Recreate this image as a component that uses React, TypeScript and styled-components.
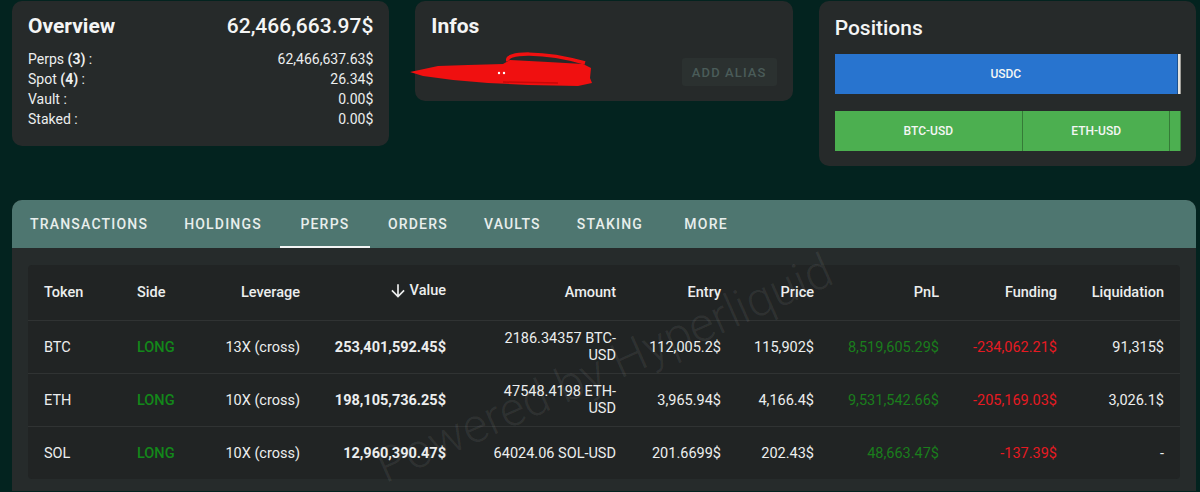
import styled, { createGlobalStyle } from "styled-components";

const GlobalStyle = createGlobalStyle`
    body {
        margin: 0;
        background: #03231f;
        font-family: Roboto, "Liberation Sans", sans-serif;
        color: #eceeee;
    }
`;

type Position = {
    token: string;
    side: string;
    leverage: string;
    value: string;
    raw: number;
    amount: string;
    entry: string;
    price: string;
    pnl: string;
    funding: string;
    liquidation: string;
};

const perps: Position[] = [
    { token: 'BTC', side: 'LONG', leverage: '13X (cross)', value: '253,401,592.45$', raw: 253401592.45, amount: '2186.34357 BTC-USD', entry: '112,005.2$', price: '115,902$', pnl: '8,519,605.29$', funding: '-234,062.21$', liquidation: '91,315$' },
    { token: 'ETH', side: 'LONG', leverage: '10X (cross)', value: '198,105,736.25$', raw: 198105736.25, amount: '47548.4198 ETH-USD', entry: '3,965.94$', price: '4,166.4$', pnl: '9,531,542.66$', funding: '-205,169.03$', liquidation: '3,026.1$' },
    { token: 'SOL', side: 'LONG', leverage: '10X (cross)', value: '12,960,390.47$', raw: 12960390.47, amount: '64024.06 SOL-USD', entry: '201.6699$', price: '202.43$', pnl: '48,663.47$', funding: '-137.39$', liquidation: '-' },
];

const spot = [
    { name: 'USDC', raw: 26.18, cor: '#2874cf' },
    { name: '', raw: 0.16, cor: '#e4e2dc' },
];

const tabs = ['TRANSACTIONS', 'HOLDINGS', 'PERPS', 'ORDERS', 'VAULTS', 'STAKING', 'MORE'];

const resumo = [
    { label: 'Perps', count: 3, valor: '62,466,637.63$' },
    { label: 'Spot', count: 4, valor: '26.34$' },
    { label: 'Vault', valor: '0.00$' },
    { label: 'Staked', valor: '0.00$' },
];

function ArrowDown() {
    return (
        <svg width="20" height="20" viewBox="0 0 24 24" fill="currentColor">
            <path d="M20 12l-1.41-1.41L13 16.17V4h-2v12.17l-5.58-5.59L4 12l8 8 8-8z" />
        </svg>
    );
}

function Rabisco() {
    // red scribble hiding the address
    return (
        <RabiscoStl width="190" height="40" viewBox="0 0 190 40">
            <path d="M2 22 L30 16 L60 15 L95 14 L102 10 L140 12 L175 14 L183 18 L182 28 L184 33 L170 36 L120 35 L80 33 L45 30 L15 26 Z" fill="#f01010" />
            <path d="M100 11 C96 2, 135 1, 177 13" stroke="#f01010" strokeWidth="3.5" fill="none" />
            <path d="M95 32 L150 33" stroke="#c80808" strokeWidth="1.5" />
            <circle cx="91" cy="23" r="1.2" fill="#fff" />
            <circle cx="96" cy="23" r="1.2" fill="#fff" />
        </RabiscoStl>
    );
}

export default function App() {
    const totalPerps = perps.reduce((s, p) => s + p.raw, 0);
    const totalSpot = spot.reduce((s, p) => s + p.raw, 0);

    return (
        <PageStl>
            <GlobalStyle />
            <TopRowStl>
                {/* overview */}
                <CardStl>
                    <CardHeaderStl>
                        <TituloStl>Overview</TituloStl>
                        <TotalStl>62,466,663.97$</TotalStl>
                    </CardHeaderStl>
                    <ResumoStl>
                        {resumo.map((r) => (
                            <ResumoLinhaStl key={r.label}>
                                <span>
                                    {r.label}
                                    {r.count !== undefined && <> <b>({r.count})</b></>} :
                                </span>
                                <span>{r.valor}</span>
                            </ResumoLinhaStl>
                        ))}
                    </ResumoStl>
                </CardStl>

                {/* infos */}
                <CardStl>
                    <TituloStl>Infos</TituloStl>
                    <InfosLinhaStl>
                        <Rabisco />
                        <AliasBtnStl>ADD ALIAS</AliasBtnStl>
                    </InfosLinhaStl>
                </CardStl>

                {/* positions */}
                <CardStl $topo={11}>
                    <TituloStl $peso={500}>Positions</TituloStl>
                    <BarraStl $topo={10}>
                        {spot.map((s, i) => (
                            <SegmentoStl key={i} $cor={s.cor} style={{ flexGrow: s.raw / totalSpot }}>
                                {s.name}
                            </SegmentoStl>
                        ))}
                    </BarraStl>
                    <BarraStl $topo={17}>
                        {perps.map((p) => {
                            const grow = p.raw / totalPerps;
                            return (
                                <SegmentoStl key={p.token} $cor="#4caf50" style={{ flexGrow: grow }}>
                                    {grow > 0.1 ? `${p.token}-USD` : ''}
                                </SegmentoStl>
                            );
                        })}
                    </BarraStl>
                </CardStl>
            </TopRowStl>

            <PainelStl>
                <TabsStl>
                    {tabs.map((t) => (
                        <TabStl key={t} $ativo={t === 'PERPS'}>{t}</TabStl>
                    ))}
                </TabsStl>
                <CorpoStl>
                    <TabelaStl>
                        <MarcaStl>Powered by Hyperliquid</MarcaStl>
                        <LinhaStl $header>
                            <CelulaStl>Token</CelulaStl>
                            <CelulaStl>Side</CelulaStl>
                            <CelulaStl $direita>Leverage</CelulaStl>
                            <CelulaStl $direita><SortStl><ArrowDown />Value</SortStl></CelulaStl>
                            <CelulaStl $direita>Amount</CelulaStl>
                            <CelulaStl $direita>Entry</CelulaStl>
                            <CelulaStl $direita>Price</CelulaStl>
                            <CelulaStl $direita>PnL</CelulaStl>
                            <CelulaStl $direita>Funding</CelulaStl>
                            <CelulaStl $direita>Liquidation</CelulaStl>
                        </LinhaStl>
                        {perps.map((p) => (
                            <LinhaStl key={p.token}>
                                <CelulaStl>{p.token}</CelulaStl>
                                <CelulaStl $cor="#13881a" $peso={500}>{p.side}</CelulaStl>
                                <CelulaStl $direita>{p.leverage}</CelulaStl>
                                <CelulaStl $direita $peso={700}>{p.value}</CelulaStl>
                                <CelulaStl $direita><QtdStl>{p.amount}</QtdStl></CelulaStl>
                                <CelulaStl $direita>{p.entry}</CelulaStl>
                                <CelulaStl $direita>{p.price}</CelulaStl>
                                <CelulaStl $direita $cor="#1a7d1c">{p.pnl}</CelulaStl>
                                <CelulaStl $direita $cor="#e61a22">{p.funding}</CelulaStl>
                                <CelulaStl $direita>{p.liquidation}</CelulaStl>
                            </LinhaStl>
                        ))}
                    </TabelaStl>
                </CorpoStl>
            </PainelStl>
        </PageStl>
    );
}

const PageStl = styled.div`
    padding: 1px 4px 0 12px;
    height: 491px;
    overflow: hidden;
`;

const TopRowStl = styled.div`
    display: grid;
    grid-template-columns: repeat(3, 1fr);
    gap: 26px;
    align-items: start;
`;

const CardStl = styled.div<{ $topo?: number }>`
    position: relative;
    background: #262a2a;
    border-radius: 10px;
    padding: ${(p) => p.$topo ?? 9}px 16px 15px;
`;

const CardHeaderStl = styled.div`
    display: flex;
    justify-content: space-between;
    align-items: center;
`;

const TituloStl = styled.div<{ $peso?: number }>`
    font-size: 21px;
    line-height: 32px;
    font-weight: ${(p) => p.$peso ?? 700};
    color: #f4f5f5;
`;

const TotalStl = styled.div`
    font-size: 21px;
    line-height: 32px;
    font-weight: 500;
    color: #f4f5f5;
`;

const ResumoStl = styled.div`
    margin-top: 7px;
    margin-bottom: 2px;
    display: flex;
    flex-direction: column;
`;

const ResumoLinhaStl = styled.div`
    display: flex;
    justify-content: space-between;
    font-size: 14px;
    line-height: 20px;

    b {
        font-weight: 700;
    }
`;

const InfosLinhaStl = styled.div`
    display: flex;
    justify-content: flex-end;
    margin-top: 16px;
`;

const RabiscoStl = styled.svg`
    position: absolute;
    left: -7px;
    top: 49px;
`;

const AliasBtnStl = styled.button`
    height: 28px;
    width: 95px;
    border: none;
    border-radius: 3px;
    background: #2b3130;
    color: #4a5c59;
    font-family: Roboto, sans-serif;
    font-size: 13px;
    font-weight: 500;
    letter-spacing: 1.1px;
`;

const BarraStl = styled.div<{ $topo: number }>`
    display: flex;
    height: 40px;
    margin-top: ${(p) => p.$topo}px;
    margin-right: -1px;
`;

const SegmentoStl = styled.div<{ $cor: string }>`
    flex-basis: 0;
    min-width: 0;
    overflow: hidden;
    background: ${(p) => p.$cor};
    border-right: 1px solid rgba(0, 0, 0, 0.3);
    display: flex;
    align-items: center;
    justify-content: center;
    font-size: 12px;
    font-weight: 500;
    color: #f4f6f4;
    white-space: nowrap;
`;

const PainelStl = styled.div`
    margin-top: 34px;
    background: #262b2b;
    border-radius: 10px 10px 0 0;
    overflow: hidden;
`;

const TabsStl = styled.div`
    display: flex;
    height: 48px;
    background: #4e7670;
`;

const TabStl = styled.div<{ $ativo?: boolean }>`
    min-width: 90px;
    padding: 2px 18px 0;
    box-sizing: border-box;
    display: flex;
    align-items: center;
    justify-content: center;
    font-size: 14px;
    font-weight: 500;
    letter-spacing: 1.2px;
    color: #e8eeec;
    border-bottom: 2px solid ${(p) => (p.$ativo ? '#f2f4f4' : 'transparent')};
`;

const CorpoStl = styled.div`
    padding: 17px 16px 12px;
`;

const TabelaStl = styled.div`
    position: relative;
    background: #212424;
    border-radius: 4px;
`;

const MarcaStl = styled.div`
    position: absolute;
    left: 50%;
    top: 48%;
    transform: translate(-50%, -50%) rotate(-24deg);
    font-size: 48px;
    font-weight: 300;
    white-space: nowrap;
    color: rgba(255, 255, 255, 0.07);
    pointer-events: none;
`;

const LinhaStl = styled.div<{ $header?: boolean }>`
    display: grid;
    grid-template-columns: 93px 84px 111px 146px 170px 105px 93px 125px 118px 107px;
    align-items: center;
    height: ${(p) => (p.$header ? 55 : 52)}px;
    font-size: 14.5px;
    font-weight: ${(p) => (p.$header ? 500 : 400)};
    border-bottom: 1px solid rgba(255, 255, 255, 0.07);

    &:last-child {
        border-bottom: none;
    }
`;

const CelulaStl = styled.div<{ $direita?: boolean; $cor?: string; $peso?: number }>`
    padding: 0 16px;
    text-align: ${(p) => (p.$direita ? 'right' : 'left')};
    color: ${(p) => p.$cor ?? '#eceeee'};
    ${(p) => p.$peso && `font-weight: ${p.$peso};`}
`;

const SortStl = styled.span`
    display: inline-flex;
    align-items: center;
    gap: 2px;
`;

const QtdStl = styled.span`
    display: inline-block;
    max-width: 130px;
    line-height: 17px;
`;
